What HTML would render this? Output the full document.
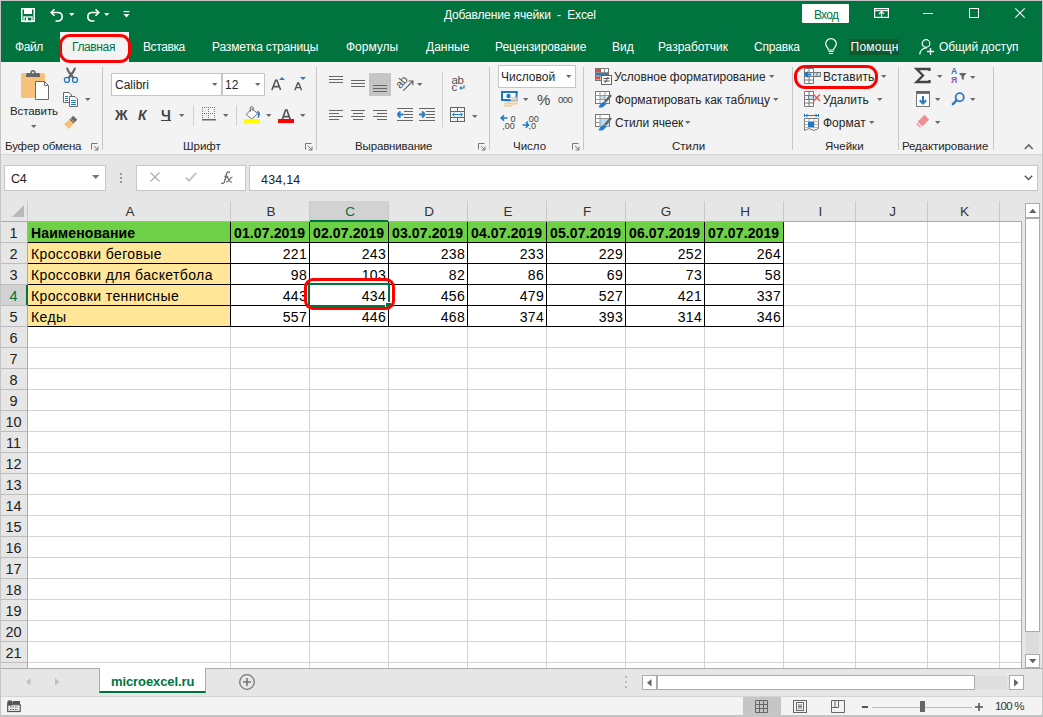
<!DOCTYPE html><html><head><meta charset="utf-8"><style>
*{box-sizing:border-box;margin:0;padding:0}
html,body{width:1043px;height:717px;overflow:hidden;background:#e6e6e6;font-family:"Liberation Sans",sans-serif;position:relative}
.a{position:absolute;white-space:nowrap;line-height:1}
svg.a{overflow:visible}
.ch{position:absolute;top:201px;height:20px;font-size:13.5px;color:#333;text-align:center;line-height:21px}
.rh{position:absolute;left:1px;width:26px;height:20px;font-size:14.5px;color:#222;text-align:center;line-height:22px;padding-right:1px}
.c{position:absolute;height:20px;font-size:14px;line-height:23px;color:#000;white-space:nowrap}
.r{text-align:right}
.hl{position:absolute;height:1px}
.vl{position:absolute;width:1px}
</style></head><body>
<div class="a" style="left:0;top:0;width:1043px;height:717px;border:1px solid #c4c4c4;border-bottom:2px solid #c4c4c4"></div>
<div class="a" style="left:1px;top:1px;width:1041px;height:61px;background:#00733e"></div>
<svg class="a" style="left:21px;top:8px" width="14" height="14" viewBox="0 0 14 14"><path d="M0.75 0.75H13.25V13.25H0.75Z" fill="none" stroke="#fff" stroke-width="1.5"/><rect x="3" y="1" width="8" height="5" fill="#fff"/><rect x="3" y="9" width="8" height="4.5" fill="none" stroke="#fff" stroke-width="1.3"/><rect x="5" y="10" width="2" height="3" fill="#fff"/></svg>
<svg class="a" style="left:50px;top:8px" width="15" height="14" viewBox="0 0 15 14"><path d="M4.5 1.2L1.2 4.5L4.5 7.8" fill="none" stroke="#fff" stroke-width="1.6"/><path d="M1.5 4.5H8.5A4.3 4.3 0 0 1 8.5 13H5.5" fill="none" stroke="#fff" stroke-width="1.6"/></svg>
<svg class="a" style="left:69px;top:13px" width="6" height="4" viewBox="0 0 6 4"><path d="M0 0H5.5L2.75 3Z" fill="#fff"/></svg>
<svg class="a" style="left:85px;top:8px" width="15" height="14" viewBox="0 0 15 14"><path d="M10.5 1.2L13.8 4.5L10.5 7.8" fill="none" stroke="#fff" stroke-width="1.6"/><path d="M13.5 4.5H6.5A4.3 4.3 0 0 0 6.5 13H9.5" fill="none" stroke="#fff" stroke-width="1.6"/></svg>
<svg class="a" style="left:104px;top:13px" width="6" height="4" viewBox="0 0 6 4"><path d="M0 0H5.5L2.75 3Z" fill="#fff"/></svg>
<svg class="a" style="left:123px;top:11px" width="7" height="8" viewBox="0 0 7 8"><rect x="0.5" y="0" width="6" height="1.2" fill="#fff"/><path d="M0.5 3H6.5L3.5 6.5Z" fill="#fff"/></svg>
<div class="a" style="left:444px;top:9px;font-size:12px;color:#fff;letter-spacing:-0.16px">Добавление ячейки &nbsp;- &nbsp;Excel</div>
<div class="a" style="left:802px;top:4px;width:47px;height:19px;background:#fff;border-radius:1px"></div>
<div class="a" style="left:814px;top:8.5px;font-size:12px;color:#00733e;letter-spacing:-0.75px">Вход</div>
<svg class="a" style="left:874px;top:8px" width="15" height="10" viewBox="0 0 15 10"><rect x="0.6" y="0.6" width="13.8" height="8.8" fill="none" stroke="#fff" stroke-width="1.2"/><rect x="0.6" y="2.6" width="13.8" height="0.1" stroke="#fff" stroke-width="1"/><path d="M7.5 3.5V9M5 6L7.5 3.5L10 6" fill="none" stroke="#fff" stroke-width="1.1"/></svg>
<div class="a" style="left:923px;top:13px;width:10px;height:1px;background:#fff"></div>
<div class="a" style="left:969px;top:8px;width:10px;height:10px;border:1px solid #fff"></div>
<svg class="a" style="left:1015px;top:8px" width="10" height="10" viewBox="0 0 10 10"><path d="M0.3 0.3L9.7 9.7M9.7 0.3L0.3 9.7" stroke="#fff" stroke-width="1.1"/></svg>
<div class="a" style="left:15px;top:41px;font-size:12px;color:#fff;letter-spacing:-0.45px">Файл</div>
<div class="a" style="left:60px;top:32px;width:69px;height:30px;background:#f3f3f3"></div>
<div class="a" style="left:72px;top:41px;font-size:12px;color:#00733e;letter-spacing:-0.38px">Главная</div>
<div class="a" style="left:143px;top:41px;font-size:12px;color:#fff;letter-spacing:-0.4px">Вставка</div>
<div class="a" style="left:212px;top:41px;font-size:12px;color:#fff;letter-spacing:-0.15px">Разметка страницы</div>
<div class="a" style="left:346px;top:41px;font-size:12px;color:#fff;">Формулы</div>
<div class="a" style="left:426px;top:41px;font-size:12px;color:#fff;">Данные</div>
<div class="a" style="left:495px;top:41px;font-size:12px;color:#fff;letter-spacing:-0.1px">Рецензирование</div>
<div class="a" style="left:612px;top:41px;font-size:12px;color:#fff;">Вид</div>
<div class="a" style="left:658px;top:41px;font-size:12px;color:#fff;">Разработчик</div>
<div class="a" style="left:754px;top:41px;font-size:12px;color:#fff;letter-spacing:-0.2px">Справка</div>
<svg class="a" style="left:825px;top:39px" width="12" height="16" viewBox="0 0 12 16"><path d="M3.5 11C3.5 9 0.7 7.5 0.7 5A5.3 5.3 0 0 1 11.3 5C11.3 7.5 8.5 9 8.5 11Z" fill="none" stroke="#fff" stroke-width="1.2"/><path d="M3.5 12.5H8.5M4 14.5H8" stroke="#fff" stroke-width="1.2"/></svg>
<div class="a" style="left:849px;top:39px;width:50px;height:16px;background:#0d5a31;overflow:hidden"><div class="a" style="left:1.5px;top:2px;font-size:12px;color:#fff;letter-spacing:0.25px">Помощник</div></div>
<svg class="a" style="left:919px;top:39px" width="16" height="16" viewBox="0 0 16 16"><circle cx="7" cy="4.5" r="3.8" fill="none" stroke="#fff" stroke-width="1.2"/><path d="M0.8 15.5A6.5 6.5 0 0 1 8 9" fill="none" stroke="#fff" stroke-width="1.2"/><path d="M11.5 9V16M8 12.5H15" stroke="#fff" stroke-width="1.3"/></svg>
<div class="a" style="left:939px;top:41px;font-size:12px;color:#fff;letter-spacing:-0.1px">Общий доступ</div>
<div class="a" style="left:1px;top:62px;width:1041px;height:93px;background:#f3f3f3;border-bottom:1px solid #d5d5d5"></div>
<div class="a" style="left:59px;top:34px;width:72px;height:29px;border:3px solid #ff0000;border-radius:11px"></div>
<div class="a" style="left:102px;top:67px;width:1px;height:83px;background:#c8c8c8"></div>
<div class="a" style="left:316px;top:67px;width:1px;height:83px;background:#c8c8c8"></div>
<div class="a" style="left:489px;top:67px;width:1px;height:83px;background:#c8c8c8"></div>
<div class="a" style="left:583px;top:67px;width:1px;height:83px;background:#c8c8c8"></div>
<div class="a" style="left:792px;top:67px;width:1px;height:83px;background:#c8c8c8"></div>
<div class="a" style="left:898px;top:67px;width:1px;height:83px;background:#c8c8c8"></div>
<div class="a" style="left:993px;top:67px;width:1px;height:83px;background:#c8c8c8"></div>
<div class="a" style="left:5px;top:141px;font-size:11.5px;color:#262626;letter-spacing:-0.15px">Буфер обмена</div>
<svg class="a" style="left:91px;top:143px" width="8" height="7" viewBox="0 0 8 7"><path d="M0.5 6.5V0.5H6.5" fill="none" stroke="#777" stroke-width="1"/><path d="M3 3L7 7M7 3.5V7H3.5" fill="none" stroke="#777" stroke-width="1"/></svg>
<div class="a" style="left:183px;top:141px;font-size:11.5px;color:#262626;">Шрифт</div>
<svg class="a" style="left:305px;top:143px" width="8" height="7" viewBox="0 0 8 7"><path d="M0.5 6.5V0.5H6.5" fill="none" stroke="#777" stroke-width="1"/><path d="M3 3L7 7M7 3.5V7H3.5" fill="none" stroke="#777" stroke-width="1"/></svg>
<div class="a" style="left:355px;top:141px;font-size:11.5px;color:#262626;letter-spacing:-0.15px">Выравнивание</div>
<svg class="a" style="left:478px;top:143px" width="8" height="7" viewBox="0 0 8 7"><path d="M0.5 6.5V0.5H6.5" fill="none" stroke="#777" stroke-width="1"/><path d="M3 3L7 7M7 3.5V7H3.5" fill="none" stroke="#777" stroke-width="1"/></svg>
<div class="a" style="left:513px;top:141px;font-size:11.5px;color:#262626;">Число</div>
<svg class="a" style="left:572px;top:143px" width="8" height="7" viewBox="0 0 8 7"><path d="M0.5 6.5V0.5H6.5" fill="none" stroke="#777" stroke-width="1"/><path d="M3 3L7 7M7 3.5V7H3.5" fill="none" stroke="#777" stroke-width="1"/></svg>
<div class="a" style="left:672px;top:141px;font-size:11.5px;color:#262626;">Стили</div>
<div class="a" style="left:825px;top:141px;font-size:11.5px;color:#262626;">Ячейки</div>
<div class="a" style="left:902px;top:141px;font-size:11.5px;color:#262626;letter-spacing:-0.1px">Редактирование</div>
<svg class="a" style="left:1024px;top:143px" width="10" height="7" viewBox="0 0 10 7"><path d="M0.8 6L4.75 2L8.7 6" fill="none" stroke="#666" stroke-width="1.6"/></svg>
<svg class="a" style="left:21px;top:69px" width="28" height="32" viewBox="0 0 28 32"><rect x="0" y="4" width="24" height="25" rx="1.5" fill="#f6c27a"/><path d="M5 8V5.5Q5 4 6.5 4H17.5Q19 4 19 5.5V8Z" fill="#666"/><circle cx="12" cy="3.5" r="2.6" fill="#666"/><circle cx="12" cy="3.5" r="1" fill="#f3f3f3"/><path d="M14.5 12.5H23.5L27.5 16.5V30.5H14.5Z" fill="#fff" stroke="#6a6a6a" stroke-width="1"/><path d="M23.5 12.5V16.5H27.5" fill="none" stroke="#6a6a6a" stroke-width="1"/></svg>
<div class="a" style="left:10px;top:106px;font-size:11.5px;color:#262626;letter-spacing:-0.1px">Вставить</div>
<svg class="a" style="left:31px;top:125px" width="6" height="4" viewBox="0 0 6 4"><path d="M0 0H5.5L2.75 3Z" fill="#6a6a6a"/></svg>
<svg class="a" style="left:64px;top:68px" width="15" height="16" viewBox="0 0 15 16"><path d="M3.2 0.6Q4.6 4.3 7 6.8L9 9.5M10.8 0.6Q9.4 4.3 7 6.8L5 9.5" fill="none" stroke="#666" stroke-width="2.2" stroke-linecap="round"/><circle cx="2.9" cy="11.9" r="2.5" fill="none" stroke="#1f78c1" stroke-width="1.3"/><circle cx="11" cy="11.9" r="2.5" fill="none" stroke="#1f78c1" stroke-width="1.3"/></svg>
<svg class="a" style="left:63px;top:92px" width="16" height="15" viewBox="0 0 16 15"><path d="M0.5 0.5H6L8.5 3V10.5H0.5Z" fill="#fff" stroke="#666" stroke-width="1"/><path d="M6.5 4.5H12L14.5 7V14.5H6.5Z" fill="#fff" stroke="#666" stroke-width="1"/><path d="M2 4.5H5M2 6.5H5M2 8.5H5M8 8.5H13M8 10.5H13M8 12.5H13" stroke="#1f78c1" stroke-width="1"/></svg>
<svg class="a" style="left:85px;top:98px" width="6" height="4" viewBox="0 0 6 4"><path d="M0 0H5.5L2.75 3Z" fill="#6a6a6a"/></svg>
<svg class="a" style="left:63px;top:114px" width="16" height="15" viewBox="0 0 16 15"><path d="M9 3L13 7" stroke="#666" stroke-width="3.5"/><path d="M1 10L7.5 4.5L11.5 8.5L6 15Z" fill="#f6c27a"/><path d="M7 5L11 9" stroke="#666" stroke-width="1.2"/></svg>
<div class="a" style="left:111px;top:73px;width:111px;height:23px;background:#fff;border:1px solid #c6c6c6"></div>
<div class="a" style="left:115px;top:79px;font-size:12px;color:#262626;">Calibri</div>
<svg class="a" style="left:212px;top:83px" width="6" height="4" viewBox="0 0 6 4"><path d="M0 0H5.5L2.75 3Z" fill="#6a6a6a"/></svg>
<div class="a" style="left:222px;top:73px;width:43px;height:23px;background:#fff;border:1px solid #c6c6c6"></div>
<div class="a" style="left:225px;top:79px;font-size:12px;color:#262626;">12</div>
<svg class="a" style="left:255px;top:83px" width="6" height="4" viewBox="0 0 6 4"><path d="M0 0H5.5L2.75 3Z" fill="#6a6a6a"/></svg>
<svg class="a" style="left:271px;top:79px" width="11" height="12" viewBox="0 0 11 12"><path d="M0.9 11L4.6 1.2H5.9L9.6 11M2.4 7.6H8.1" fill="none" stroke="#555" stroke-width="1.6"/></svg>
<svg class="a" style="left:279px;top:77px" width="6" height="3" viewBox="0 0 6 3"><path d="M0 3H6L3 0Z" fill="#2a7ac4"/></svg>
<svg class="a" style="left:294px;top:82px" width="9" height="9" viewBox="0 0 9 9"><path d="M0.8 8.2L3.8 0.9H4.6L7.6 8.2M2 5.6H6.4" fill="none" stroke="#555" stroke-width="1.4"/></svg>
<svg class="a" style="left:300px;top:77px" width="6" height="3" viewBox="0 0 6 3"><path d="M0 0H6L3 3Z" fill="#2a7ac4"/></svg>
<div class="a" style="left:115px;top:108px;font-size:14px;color:#444;font-weight:bold">Ж</div>
<div class="a" style="left:138px;top:108px;font-size:14px;color:#444;font-weight:bold;font-style:italic">К</div>
<div class="a" style="left:161px;top:108px;font-size:14px;color:#444;font-weight:bold">Ч</div>
<div class="a" style="left:161px;top:120px;width:10px;height:1px;background:#444"></div>
<svg class="a" style="left:179px;top:114px" width="6" height="4" viewBox="0 0 6 4"><path d="M0 0H5.5L2.75 3Z" fill="#6a6a6a"/></svg>
<div class="a" style="left:193px;top:105px;width:1px;height:21px;background:#d0d0d0"></div>
<svg class="a" style="left:202px;top:107px" width="14" height="14" viewBox="0 0 14 14"><rect x="0" y="0" width="1" height="1" fill="#777"/><rect x="0" y="2" width="1" height="1" fill="#777"/><rect x="0" y="4" width="1" height="1" fill="#777"/><rect x="0" y="6" width="1" height="1" fill="#777"/><rect x="0" y="8" width="1" height="1" fill="#777"/><rect x="0" y="10" width="1" height="1" fill="#777"/><rect x="0" y="12" width="1" height="1" fill="#777"/><rect x="2" y="0" width="1" height="1" fill="#777"/><rect x="2" y="6" width="1" height="1" fill="#777"/><rect x="2" y="12" width="1" height="1" fill="#777"/><rect x="4" y="0" width="1" height="1" fill="#777"/><rect x="4" y="6" width="1" height="1" fill="#777"/><rect x="4" y="12" width="1" height="1" fill="#777"/><rect x="6" y="0" width="1" height="1" fill="#777"/><rect x="6" y="2" width="1" height="1" fill="#777"/><rect x="6" y="4" width="1" height="1" fill="#777"/><rect x="6" y="6" width="1" height="1" fill="#777"/><rect x="6" y="8" width="1" height="1" fill="#777"/><rect x="6" y="10" width="1" height="1" fill="#777"/><rect x="6" y="12" width="1" height="1" fill="#777"/><rect x="8" y="0" width="1" height="1" fill="#777"/><rect x="8" y="6" width="1" height="1" fill="#777"/><rect x="8" y="12" width="1" height="1" fill="#777"/><rect x="10" y="0" width="1" height="1" fill="#777"/><rect x="10" y="6" width="1" height="1" fill="#777"/><rect x="10" y="12" width="1" height="1" fill="#777"/><rect x="12" y="0" width="1" height="1" fill="#777"/><rect x="12" y="2" width="1" height="1" fill="#777"/><rect x="12" y="4" width="1" height="1" fill="#777"/><rect x="12" y="6" width="1" height="1" fill="#777"/><rect x="12" y="8" width="1" height="1" fill="#777"/><rect x="12" y="10" width="1" height="1" fill="#777"/><rect x="12" y="12" width="1" height="1" fill="#777"/><rect x="0" y="12" width="14" height="1.5" fill="#666"/></svg>
<svg class="a" style="left:223px;top:114px" width="6" height="4" viewBox="0 0 6 4"><path d="M0 0H5.5L2.75 3Z" fill="#6a6a6a"/></svg>
<div class="a" style="left:236px;top:105px;width:1px;height:21px;background:#d0d0d0"></div>
<svg class="a" style="left:244px;top:106px" width="17" height="17" viewBox="0 0 17 17"><path d="M2.2 8.5L8 2.6L13.6 7.6L7.7 13Z" fill="#fff" stroke="#6a6a6a" stroke-width="1"/><path d="M6.3 5.8V1.8Q6.3 0.7 7.4 0.7H8Q9.1 0.7 9.1 1.8V4.8" fill="none" stroke="#6a6a6a" stroke-width="1"/><path d="M13.2 4.6Q16.2 5.6 15.9 8.6Q15.6 11 13.6 12.6Q14.4 9.2 13.2 4.6Z" fill="#1f78c1"/><rect x="0" y="13" width="16" height="4" fill="#ffff00"/></svg>
<svg class="a" style="left:266px;top:114px" width="6" height="4" viewBox="0 0 6 4"><path d="M0 0H5.5L2.75 3Z" fill="#6a6a6a"/></svg>
<svg class="a" style="left:281px;top:108px" width="11" height="12" viewBox="0 0 11 12"><path d="M0.9 12.5L4.6 2H5.9L9.6 12.5M2.4 8.6H8.1" fill="none" stroke="#555" stroke-width="1.7"/></svg>
<div class="a" style="left:278px;top:119px;width:16px;height:4px;background:#ff0000"></div>
<svg class="a" style="left:300px;top:114px" width="6" height="4" viewBox="0 0 6 4"><path d="M0 0H5.5L2.75 3Z" fill="#6a6a6a"/></svg>
<div class="a" style="left:329px;top:76px;width:14px;height:1px;background:#666"></div>
<div class="a" style="left:329px;top:79px;width:14px;height:1px;background:#666"></div>
<div class="a" style="left:329px;top:82px;width:14px;height:1px;background:#666"></div>
<div class="a" style="left:351px;top:80px;width:14px;height:1px;background:#666"></div>
<div class="a" style="left:351px;top:83px;width:14px;height:1px;background:#666"></div>
<div class="a" style="left:351px;top:86px;width:14px;height:1px;background:#666"></div>
<div class="a" style="left:369px;top:73px;width:22px;height:23px;background:#c5c5c5"></div>
<div class="a" style="left:373px;top:85px;width:14px;height:1px;background:#666"></div>
<div class="a" style="left:373px;top:88px;width:14px;height:1px;background:#666"></div>
<div class="a" style="left:373px;top:91px;width:14px;height:1px;background:#666"></div>
<svg class="a" style="left:397px;top:75px" width="17" height="17" viewBox="0 0 17 17"><text x="0" y="0" transform="translate(3.2 14.2) rotate(-48)" font-family="Liberation Sans" font-size="11.5" fill="#505050" letter-spacing="-0.3">ab</text><path d="M6.3 15.6L15.6 6.3M11.6 6H15.9V10.3" fill="none" stroke="#555" stroke-width="1.1"/></svg>
<svg class="a" style="left:417px;top:83px" width="6" height="4" viewBox="0 0 6 4"><path d="M0 0H5.5L2.75 3Z" fill="#6a6a6a"/></svg>
<div class="a" style="left:329px;top:110px;width:14px;height:1px;background:#666"></div>
<div class="a" style="left:351px;top:110px;width:14px;height:1px;background:#666"></div>
<div class="a" style="left:373px;top:110px;width:14px;height:1px;background:#666"></div>
<div class="a" style="left:329px;top:113px;width:10px;height:1px;background:#666"></div>
<div class="a" style="left:353px;top:113px;width:10px;height:1px;background:#666"></div>
<div class="a" style="left:377px;top:113px;width:10px;height:1px;background:#666"></div>
<div class="a" style="left:329px;top:116px;width:14px;height:1px;background:#666"></div>
<div class="a" style="left:351px;top:116px;width:14px;height:1px;background:#666"></div>
<div class="a" style="left:373px;top:116px;width:14px;height:1px;background:#666"></div>
<div class="a" style="left:329px;top:119px;width:10px;height:1px;background:#666"></div>
<div class="a" style="left:353px;top:119px;width:10px;height:1px;background:#666"></div>
<div class="a" style="left:377px;top:119px;width:10px;height:1px;background:#666"></div>
<svg class="a" style="left:397px;top:108px" width="16" height="13" viewBox="0 0 16 13"><path d="M0 0.5H16M7 3.5H16M7 6.5H16M7 9.5H16M0 12.5H16" stroke="#666" stroke-width="1"/><path d="M0.5 6.5L3.5 3.5M0.5 6.5L3.5 9.5M1 6.5H6.5" stroke="#2a7ac4" stroke-width="1.8" fill="none"/></svg>
<svg class="a" style="left:419px;top:108px" width="16" height="13" viewBox="0 0 16 13"><path d="M0 0.5H16M7 3.5H16M7 6.5H16M7 9.5H16M0 12.5H16" stroke="#666" stroke-width="1"/><path d="M6 6.5L3 3.5M6 6.5L3 9.5M0 6.5H5.5" stroke="#2a7ac4" stroke-width="1.8" fill="none"/></svg>
<div class="a" style="left:442px;top:72px;width:1px;height:55px;background:#d0d0d0"></div>
<div class="a" style="left:451.5px;top:74.5px;font-size:11.5px;color:#505050;letter-spacing:-0.4px">ab</div>
<div class="a" style="left:451.5px;top:82px;font-size:11.5px;color:#505050;">c</div>
<svg class="a" style="left:459px;top:85px" width="6" height="5" viewBox="0 0 6 5"><path d="M5 0V3H1M2.5 1.5L1 3L2.5 4.5" fill="none" stroke="#2a7ac4" stroke-width="1.1"/></svg>
<svg class="a" style="left:450px;top:107px" width="15" height="15" viewBox="0 0 15 15"><rect x="0.5" y="0.5" width="14" height="14" fill="none" stroke="#666" stroke-width="1"/><path d="M0.5 4.5H14.5M0.5 10.5H14.5M7.5 0.5V4.5M7.5 10.5V14.5" stroke="#666" stroke-width="1"/><path d="M2.5 7.5H12.5M4.5 5.8L2.5 7.5L4.5 9.2M10.5 5.8L12.5 7.5L10.5 9.2" fill="none" stroke="#2a7ac4" stroke-width="1"/></svg>
<svg class="a" style="left:472px;top:115px" width="6" height="4" viewBox="0 0 6 4"><path d="M0 0H5.5L2.75 3Z" fill="#6a6a6a"/></svg>
<div class="a" style="left:498px;top:65px;width:78px;height:23px;background:#fff;border:1px solid #c6c6c6"></div>
<div class="a" style="left:501px;top:71px;font-size:12px;color:#262626;">Числовой</div>
<svg class="a" style="left:566px;top:75px" width="6" height="4" viewBox="0 0 6 4"><path d="M0 0H5.5L2.75 3Z" fill="#6a6a6a"/></svg>
<svg class="a" style="left:501px;top:91px" width="17" height="17" viewBox="0 0 17 17"><rect x="1" y="1" width="14.5" height="8" fill="#fff" stroke="#1f78c1" stroke-width="2"/><circle cx="7.5" cy="5" r="2.2" fill="#1f78c1"/><path d="M0 0H3L0 3Z M16.5 0H13.5L16.5 3Z M0 10H3L0 7Z" fill="#1f78c1"/><path d="M10 6.8H16M10 8.8H16M10 10.8H16M10 12.8H16" stroke="#f6c27a" stroke-width="1.5" stroke-linecap="round"/><path d="M4 10.8H10M4 12.8H10M4 14.8H10" stroke="#f6c27a" stroke-width="1.5" stroke-linecap="round"/><path d="M10 7.8H16M10 9.8H16M10 11.8H16M4 11.8H10M4 13.8H10" stroke="#fff" stroke-width="0.5"/></svg>
<svg class="a" style="left:523px;top:98px" width="6" height="4" viewBox="0 0 6 4"><path d="M0 0H5.5L2.75 3Z" fill="#6a6a6a"/></svg>
<div class="a" style="left:537px;top:92px;font-size:15px;color:#444;">%</div>
<div class="a" style="left:558px;top:94.5px;font-size:9.5px;color:#444;letter-spacing:-0.5px">000</div>
<svg class="a" style="left:500px;top:114px" width="17" height="16" viewBox="0 0 17 16"><path d="M1.2 4H7.5M4 1.3L1.2 4L4 6.7" fill="none" stroke="#1f78c1" stroke-width="1.6"/><text x="10.5" y="7.5" font-family="Liberation Sans" font-size="9" fill="#444">0</text><text x="2.2" y="14.5" font-family="Liberation Sans" font-size="9" fill="#444">,00</text></svg>
<svg class="a" style="left:522px;top:114px" width="17" height="16" viewBox="0 0 17 16"><text x="4.2" y="7.5" font-family="Liberation Sans" font-size="9" fill="#444">,00</text><path d="M0.5 11H6.5M3.8 8.3L6.5 11L3.8 13.7" fill="none" stroke="#1f78c1" stroke-width="1.6"/><text x="6.5" y="14.5" font-family="Liberation Sans" font-size="9" fill="#444">,0</text></svg>
<svg class="a" style="left:595px;top:68px" width="17" height="17" viewBox="0 0 17 17"><rect x="0.5" y="0.5" width="13" height="12" fill="#fff" stroke="#777" stroke-width="1"/><rect x="1" y="1" width="5" height="3" fill="#e04b4b"/><rect x="1" y="5" width="12" height="2.5" fill="#2a7ac4"/><rect x="1" y="8.5" width="4" height="3" fill="#e04b4b"/><path d="M5 0.5V12.5M9.5 0.5V12.5M0.5 4.5H13.5M0.5 8H13.5" stroke="#777" stroke-width="0.8"/><rect x="6.5" y="7.5" width="10" height="9" fill="#fff" stroke="#666" stroke-width="1"/><path d="M8.5 10.5H14.5M8.5 13H14.5M10 15L13 9" stroke="#555" stroke-width="1"/></svg>
<div class="a" style="left:614px;top:71px;font-size:12px;color:#262626;letter-spacing:-0.05px">Условное форматирование</div>
<svg class="a" style="left:769px;top:75px" width="6" height="4" viewBox="0 0 6 4"><path d="M0 0H5.5L2.75 3Z" fill="#6a6a6a"/></svg>
<svg class="a" style="left:595px;top:91px" width="17" height="17" viewBox="0 0 17 17"><rect x="0.5" y="0.5" width="14" height="12" fill="#fff" stroke="#777" stroke-width="1"/><rect x="5" y="4.5" width="5" height="4" fill="#b7dbef"/><path d="M5 0.5V12.5M10 0.5V12.5M0.5 4.5H14.5M0.5 8.5H14.5" stroke="#999" stroke-width="1"/><path d="M16 4L10 11" stroke="#666" stroke-width="2.5"/><path d="M9 10.5L11.5 13L7.5 16.5H3.5Q5 12 9 10.5Z" fill="#2a7ac4"/></svg>
<div class="a" style="left:615px;top:94px;font-size:12px;color:#262626;letter-spacing:-0.05px">Форматировать как таблицу</div>
<svg class="a" style="left:773px;top:98px" width="6" height="4" viewBox="0 0 6 4"><path d="M0 0H5.5L2.75 3Z" fill="#6a6a6a"/></svg>
<svg class="a" style="left:595px;top:114px" width="17" height="17" viewBox="0 0 17 17"><rect x="0.5" y="0.5" width="14" height="12" fill="#fff" stroke="#777" stroke-width="1"/><rect x="5" y="4.5" width="9" height="8" fill="#b7dbef"/><path d="M5 0.5V12.5M0.5 4.5H14.5M0.5 8.5H5" stroke="#999" stroke-width="1"/><path d="M16 4L10 11" stroke="#666" stroke-width="2.5"/><path d="M9 10.5L11.5 13L7.5 16.5H3.5Q5 12 9 10.5Z" fill="#2a7ac4"/></svg>
<div class="a" style="left:615px;top:117px;font-size:12px;color:#262626;letter-spacing:-0.1px">Стили ячеек</div>
<svg class="a" style="left:685px;top:121px" width="6" height="4" viewBox="0 0 6 4"><path d="M0 0H5.5L2.75 3Z" fill="#6a6a6a"/></svg>
<svg class="a" style="left:804px;top:68px" width="17" height="17" viewBox="0 0 17 17"><path d="M0.5 0.5H9.5V15.5H0.5Z" fill="#fff" stroke="#777"/><path d="M5 0.5V4.5M0.5 4.5H9.5M0.5 8.5H9.5M0.5 12H9.5M5 8.5V15.5" stroke="#777"/><rect x="9.5" y="4.5" width="7" height="4" fill="#b7dbef" stroke="#777"/><path d="M13 4.5V8.5" stroke="#777"/><path d="M1.3 6.5H7.5M4 3.8L1.3 6.5L4 9.2" fill="none" stroke="#1f78c1" stroke-width="1.8"/></svg>
<div class="a" style="left:823px;top:71px;font-size:12px;color:#262626;letter-spacing:0.05px">Вставить</div>
<svg class="a" style="left:881px;top:75px" width="6" height="4" viewBox="0 0 6 4"><path d="M0 0H5.5L2.75 3Z" fill="#6a6a6a"/></svg>
<svg class="a" style="left:804px;top:91px" width="17" height="16" viewBox="0 0 17 16"><path d="M0.5 0.5H9.5V4.5H0.5Z M5 0.5V4.5 M0.5 8.5H9.5V15.5H0.5Z M5 8.5V15.5 M0.5 12H9.5" fill="#fff" stroke="#777"/><path d="M0.5 4.5V8.5" stroke="#777"/><rect x="4.5" y="4.5" width="5" height="4" fill="#b7dbef" stroke="#777"/><path d="M9.5 3.5L16 10M16 3.5L9.5 10" stroke="#f04e4e" stroke-width="1.4"/></svg>
<div class="a" style="left:823px;top:94px;font-size:12px;color:#262626;">Удалить</div>
<svg class="a" style="left:877px;top:98px" width="6" height="4" viewBox="0 0 6 4"><path d="M0 0H5.5L2.75 3Z" fill="#6a6a6a"/></svg>
<svg class="a" style="left:804px;top:114px" width="16" height="17" viewBox="0 0 16 17"><path d="M1.5 1.5H13.5M0.5 0V3M14.5 0V3M3.5 0.2L1.5 1.5L3.5 2.8M11.5 0.2L13.5 1.5L11.5 2.8" stroke="#1f78c1" stroke-width="1" fill="none"/><path d="M0.5 4.5H14.5V14.5L10 16.5L5 14.5L0.5 16.5Z" fill="#fff" stroke="#777"/><path d="M0.5 7.5H14.5M0.5 10.5H14.5M0.5 13.5H14.5M5 4.5V14.5M10 4.5V14.5" stroke="#aaa" stroke-width="0.9"/><rect x="4" y="8" width="6" height="5" fill="#1f78c1"/></svg>
<div class="a" style="left:823px;top:117px;font-size:12px;color:#262626;">Формат</div>
<svg class="a" style="left:869px;top:121px" width="6" height="4" viewBox="0 0 6 4"><path d="M0 0H5.5L2.75 3Z" fill="#6a6a6a"/></svg>
<div class="a" style="left:794px;top:65px;width:84px;height:24px;border:3px solid #ff0000;border-radius:11px"></div>
<svg class="a" style="left:915px;top:68px" width="16" height="16" viewBox="0 0 16 16"><path d="M14.5 3V1H1.5L8 7.5L1.5 14H14.5V12" fill="none" stroke="#444" stroke-width="2.3"/></svg>
<svg class="a" style="left:937px;top:75px" width="6" height="4" viewBox="0 0 6 4"><path d="M0 0H5.5L2.75 3Z" fill="#6a6a6a"/></svg>
<div class="a" style="left:951px;top:67px;font-size:8.5px;color:#2a7ac4;font-weight:bold">A</div>
<div class="a" style="left:951px;top:76px;font-size:8.5px;color:#8e4fc1;font-weight:bold">Я</div>
<svg class="a" style="left:959px;top:73px" width="8" height="7" viewBox="0 0 8 7"><path d="M0 0H7.5L4.8 3.5V7L2.7 6V3.5Z" fill="#666"/></svg>
<svg class="a" style="left:970px;top:76px" width="6" height="4" viewBox="0 0 6 4"><path d="M0 0H5.5L2.75 3Z" fill="#6a6a6a"/></svg>
<svg class="a" style="left:916px;top:91px" width="14" height="16" viewBox="0 0 14 16"><rect x="0" y="0" width="14" height="3" fill="#666"/><rect x="0.5" y="2.5" width="13" height="13" fill="#fff" stroke="#777" stroke-width="1"/><path d="M7 5V12.5M3.8 9.3L7 12.5L10.2 9.3" fill="none" stroke="#2a7ac4" stroke-width="2"/></svg>
<svg class="a" style="left:935px;top:98px" width="6" height="4" viewBox="0 0 6 4"><path d="M0 0H5.5L2.75 3Z" fill="#6a6a6a"/></svg>
<svg class="a" style="left:951px;top:92px" width="14" height="14" viewBox="0 0 14 14"><circle cx="8.7" cy="5.3" r="4.1" fill="none" stroke="#2a7ac4" stroke-width="1.8"/><path d="M5.8 8.2L1.2 12.8" stroke="#2a7ac4" stroke-width="2.5"/></svg>
<svg class="a" style="left:970px;top:98px" width="6" height="4" viewBox="0 0 6 4"><path d="M0 0H5.5L2.75 3Z" fill="#6a6a6a"/></svg>
<svg class="a" style="left:916px;top:114px" width="14" height="14" viewBox="0 0 14 14"><path d="M8.5 0.8L13.2 5.5L6 12.7L1.3 8Z" fill="#f08b92"/><path d="M1.3 8L6 12.7" stroke="#fff" stroke-width="1"/><path d="M0.6 9.5L4.5 13.4" stroke="#f08b92" stroke-width="1.3"/></svg>
<svg class="a" style="left:935px;top:121px" width="6" height="4" viewBox="0 0 6 4"><path d="M0 0H5.5L2.75 3Z" fill="#6a6a6a"/></svg>
<div class="a" style="left:4px;top:165px;width:102px;height:26px;background:#fff;border:1px solid #c6c6c6"></div>
<div class="a" style="left:11px;top:173px;font-size:12.5px;color:#222;letter-spacing:-0.3px">C4</div>
<svg class="a" style="left:92px;top:175px" width="8" height="5" viewBox="0 0 8 5"><path d="M0 0H7.5L3.75 4Z" fill="#777"/></svg>
<div class="a" style="left:120px;top:173px;width:2px;height:2px;background:#999"></div>
<div class="a" style="left:120px;top:177px;width:2px;height:2px;background:#999"></div>
<div class="a" style="left:120px;top:181px;width:2px;height:2px;background:#999"></div>
<div class="a" style="left:136px;top:165px;width:110px;height:26px;background:#fff;border:1px solid #c6c6c6"></div>
<svg class="a" style="left:150px;top:172px" width="10" height="10" viewBox="0 0 10 10"><path d="M0.5 0.5L9.5 9.5M9.5 0.5L0.5 9.5" stroke="#b0b0b0" stroke-width="1.3"/></svg>
<svg class="a" style="left:185px;top:172px" width="12" height="10" viewBox="0 0 12 10"><path d="M0.8 5.5L4 8.8L11.2 1" fill="none" stroke="#c6c6c6" stroke-width="2"/></svg>
<svg class="a" style="left:220px;top:171px" width="15" height="15" viewBox="0 0 15 15"><path d="M10 1.6Q8.3 0.2 7 1.8Q6.3 2.8 5.6 6.5L4.6 10.5Q3.8 13.2 1.2 12.2" fill="none" stroke="#666" stroke-width="1.25"/><path d="M4.3 5.3H8.2" stroke="#666" stroke-width="1"/><path d="M6.2 6.5Q7.5 6 8.3 7.5L10 10.5Q10.8 11.5 12 10.8M12.5 6.3Q11.8 6 10.8 7L8.5 9.8Q7.5 11.2 6.2 10.8" fill="none" stroke="#666" stroke-width="1.1"/></svg>
<div class="a" style="left:249px;top:165px;width:789px;height:26px;background:#fff;border:1px solid #c6c6c6"></div>
<div class="a" style="left:261px;top:173.5px;font-size:12.5px;color:#222;letter-spacing:0.2px">434,14</div>
<svg class="a" style="left:1024px;top:175px" width="9" height="6" viewBox="0 0 9 6"><path d="M0.8 0.8L4.5 4.5L8.2 0.8" fill="none" stroke="#555" stroke-width="1.4"/></svg>
<div class="a" style="left:28px;top:222px;width:993px;height:446px;background:#fff"></div>
<div class="a" style="left:1px;top:201px;width:1021px;height:21px;background:#e6e6e6;border-bottom:1px solid #ababab"></div>
<div class="a" style="left:1px;top:222px;width:27px;height:446px;background:#e6e6e6;border-right:1px solid #ababab"></div>
<div class="a" style="left:27px;top:201px;width:1px;height:20px;background:#c8c8c8"></div>
<svg class="a" style="left:12px;top:205px" width="13" height="13" viewBox="0 0 13 13"><path d="M12 0V12H0Z" fill="#b8b8b8"/></svg>
<div class="a" style="left:310px;top:201px;width:78px;height:21px;background:#d2d2d2;border-bottom:2px solid #00733e"></div>
<div class="a" style="left:1px;top:285px;width:27px;height:20px;background:#d2d2d2;border-right:2px solid #00733e"></div>
<div class="ch" style="left:29px;width:202px;color:#333">A</div>
<div class="a" style="left:230px;top:201px;width:1px;height:20px;background:#c8c8c8"></div>
<div class="ch" style="left:232px;width:78px;color:#333">B</div>
<div class="a" style="left:309px;top:201px;width:1px;height:20px;background:#c8c8c8"></div>
<div class="ch" style="left:311px;width:78px;color:#00733e">C</div>
<div class="a" style="left:388px;top:201px;width:1px;height:20px;background:#c8c8c8"></div>
<div class="ch" style="left:390px;width:78px;color:#333">D</div>
<div class="a" style="left:467px;top:201px;width:1px;height:20px;background:#c8c8c8"></div>
<div class="ch" style="left:469px;width:78px;color:#333">E</div>
<div class="a" style="left:546px;top:201px;width:1px;height:20px;background:#c8c8c8"></div>
<div class="ch" style="left:548px;width:78px;color:#333">F</div>
<div class="a" style="left:625px;top:201px;width:1px;height:20px;background:#c8c8c8"></div>
<div class="ch" style="left:627px;width:78px;color:#333">G</div>
<div class="a" style="left:704px;top:201px;width:1px;height:20px;background:#c8c8c8"></div>
<div class="ch" style="left:706px;width:78px;color:#333">H</div>
<div class="a" style="left:783px;top:201px;width:1px;height:20px;background:#c8c8c8"></div>
<div class="ch" style="left:785px;width:71px;color:#333">I</div>
<div class="a" style="left:855px;top:201px;width:1px;height:20px;background:#c8c8c8"></div>
<div class="ch" style="left:857px;width:71px;color:#333">J</div>
<div class="a" style="left:927px;top:201px;width:1px;height:20px;background:#c8c8c8"></div>
<div class="ch" style="left:929px;width:71px;color:#333">K</div>
<div class="a" style="left:999px;top:201px;width:1px;height:20px;background:#c8c8c8"></div>
<div class="hl" style="left:28px;top:242px;width:993px;background:#d4d4d4"></div>
<div class="hl" style="left:1px;top:242px;width:26px;background:#bcbcbc"></div>
<div class="hl" style="left:28px;top:263px;width:993px;background:#d4d4d4"></div>
<div class="hl" style="left:1px;top:263px;width:26px;background:#bcbcbc"></div>
<div class="hl" style="left:28px;top:284px;width:993px;background:#d4d4d4"></div>
<div class="hl" style="left:1px;top:284px;width:26px;background:#bcbcbc"></div>
<div class="hl" style="left:28px;top:305px;width:993px;background:#d4d4d4"></div>
<div class="hl" style="left:1px;top:305px;width:26px;background:#bcbcbc"></div>
<div class="hl" style="left:28px;top:326px;width:993px;background:#d4d4d4"></div>
<div class="hl" style="left:1px;top:326px;width:26px;background:#bcbcbc"></div>
<div class="hl" style="left:28px;top:347px;width:993px;background:#d4d4d4"></div>
<div class="hl" style="left:1px;top:347px;width:26px;background:#bcbcbc"></div>
<div class="hl" style="left:28px;top:368px;width:993px;background:#d4d4d4"></div>
<div class="hl" style="left:1px;top:368px;width:26px;background:#bcbcbc"></div>
<div class="hl" style="left:28px;top:389px;width:993px;background:#d4d4d4"></div>
<div class="hl" style="left:1px;top:389px;width:26px;background:#bcbcbc"></div>
<div class="hl" style="left:28px;top:410px;width:993px;background:#d4d4d4"></div>
<div class="hl" style="left:1px;top:410px;width:26px;background:#bcbcbc"></div>
<div class="hl" style="left:28px;top:431px;width:993px;background:#d4d4d4"></div>
<div class="hl" style="left:1px;top:431px;width:26px;background:#bcbcbc"></div>
<div class="hl" style="left:28px;top:452px;width:993px;background:#d4d4d4"></div>
<div class="hl" style="left:1px;top:452px;width:26px;background:#bcbcbc"></div>
<div class="hl" style="left:28px;top:473px;width:993px;background:#d4d4d4"></div>
<div class="hl" style="left:1px;top:473px;width:26px;background:#bcbcbc"></div>
<div class="hl" style="left:28px;top:494px;width:993px;background:#d4d4d4"></div>
<div class="hl" style="left:1px;top:494px;width:26px;background:#bcbcbc"></div>
<div class="hl" style="left:28px;top:515px;width:993px;background:#d4d4d4"></div>
<div class="hl" style="left:1px;top:515px;width:26px;background:#bcbcbc"></div>
<div class="hl" style="left:28px;top:536px;width:993px;background:#d4d4d4"></div>
<div class="hl" style="left:1px;top:536px;width:26px;background:#bcbcbc"></div>
<div class="hl" style="left:28px;top:557px;width:993px;background:#d4d4d4"></div>
<div class="hl" style="left:1px;top:557px;width:26px;background:#bcbcbc"></div>
<div class="hl" style="left:28px;top:578px;width:993px;background:#d4d4d4"></div>
<div class="hl" style="left:1px;top:578px;width:26px;background:#bcbcbc"></div>
<div class="hl" style="left:28px;top:599px;width:993px;background:#d4d4d4"></div>
<div class="hl" style="left:1px;top:599px;width:26px;background:#bcbcbc"></div>
<div class="hl" style="left:28px;top:620px;width:993px;background:#d4d4d4"></div>
<div class="hl" style="left:1px;top:620px;width:26px;background:#bcbcbc"></div>
<div class="hl" style="left:28px;top:641px;width:993px;background:#d4d4d4"></div>
<div class="hl" style="left:1px;top:641px;width:26px;background:#bcbcbc"></div>
<div class="hl" style="left:28px;top:662px;width:993px;background:#d4d4d4"></div>
<div class="hl" style="left:1px;top:662px;width:26px;background:#bcbcbc"></div>
<div class="vl" style="left:230px;top:222px;height:446px;background:#d4d4d4"></div>
<div class="vl" style="left:309px;top:222px;height:446px;background:#d4d4d4"></div>
<div class="vl" style="left:388px;top:222px;height:446px;background:#d4d4d4"></div>
<div class="vl" style="left:467px;top:222px;height:446px;background:#d4d4d4"></div>
<div class="vl" style="left:546px;top:222px;height:446px;background:#d4d4d4"></div>
<div class="vl" style="left:625px;top:222px;height:446px;background:#d4d4d4"></div>
<div class="vl" style="left:704px;top:222px;height:446px;background:#d4d4d4"></div>
<div class="vl" style="left:783px;top:222px;height:446px;background:#d4d4d4"></div>
<div class="vl" style="left:855px;top:222px;height:446px;background:#d4d4d4"></div>
<div class="vl" style="left:927px;top:222px;height:446px;background:#d4d4d4"></div>
<div class="vl" style="left:999px;top:222px;height:446px;background:#d4d4d4"></div>
<div class="a" style="left:1021px;top:221px;width:1px;height:447px;background:#ababab"></div>
<div class="rh" style="top:222px;color:#222">1</div>
<div class="rh" style="top:243px;color:#222">2</div>
<div class="rh" style="top:264px;color:#222">3</div>
<div class="rh" style="top:285px;color:#00733e">4</div>
<div class="rh" style="top:306px;color:#222">5</div>
<div class="rh" style="top:327px;color:#222">6</div>
<div class="rh" style="top:348px;color:#222">7</div>
<div class="rh" style="top:369px;color:#222">8</div>
<div class="rh" style="top:390px;color:#222">9</div>
<div class="rh" style="top:411px;color:#222">10</div>
<div class="rh" style="top:432px;color:#222">11</div>
<div class="rh" style="top:453px;color:#222">12</div>
<div class="rh" style="top:474px;color:#222">13</div>
<div class="rh" style="top:495px;color:#222">14</div>
<div class="rh" style="top:516px;color:#222">15</div>
<div class="rh" style="top:537px;color:#222">16</div>
<div class="rh" style="top:558px;color:#222">17</div>
<div class="rh" style="top:579px;color:#222">18</div>
<div class="rh" style="top:600px;color:#222">19</div>
<div class="rh" style="top:621px;color:#222">20</div>
<div class="rh" style="top:642px;color:#222">21</div>
<div class="rh" style="top:663px;color:#222">22</div>
<div class="a" style="left:28px;top:222px;width:755px;height:20px;background:#6dd046"></div>
<div class="a" style="left:28px;top:243px;width:202px;height:83px;background:#ffe699"></div>
<div class="hl" style="left:28px;top:242px;width:756px;background:#000"></div>
<div class="hl" style="left:28px;top:263px;width:756px;background:#000"></div>
<div class="hl" style="left:28px;top:284px;width:756px;background:#000"></div>
<div class="hl" style="left:28px;top:305px;width:756px;background:#000"></div>
<div class="hl" style="left:28px;top:326px;width:756px;background:#000"></div>
<div class="vl" style="left:230px;top:222px;height:105px;background:#000"></div>
<div class="vl" style="left:309px;top:222px;height:105px;background:#000"></div>
<div class="vl" style="left:388px;top:222px;height:105px;background:#000"></div>
<div class="vl" style="left:467px;top:222px;height:105px;background:#000"></div>
<div class="vl" style="left:546px;top:222px;height:105px;background:#000"></div>
<div class="vl" style="left:625px;top:222px;height:105px;background:#000"></div>
<div class="vl" style="left:704px;top:222px;height:105px;background:#000"></div>
<div class="vl" style="left:783px;top:222px;height:105px;background:#000"></div>
<div class="c" style="left:28px;top:222px;width:202px;font-weight:bold;padding-left:3px;letter-spacing:0.12px">Наименование</div>
<div class="c" style="left:231px;top:222px;width:78px;font-weight:bold;padding-left:3px;letter-spacing:0.12px">01.07.2019</div>
<div class="c" style="left:310px;top:222px;width:78px;font-weight:bold;padding-left:3px;letter-spacing:0.12px">02.07.2019</div>
<div class="c" style="left:389px;top:222px;width:78px;font-weight:bold;padding-left:3px;letter-spacing:0.12px">03.07.2019</div>
<div class="c" style="left:468px;top:222px;width:78px;font-weight:bold;padding-left:3px;letter-spacing:0.12px">04.07.2019</div>
<div class="c" style="left:547px;top:222px;width:78px;font-weight:bold;padding-left:3px;letter-spacing:0.12px">05.07.2019</div>
<div class="c" style="left:626px;top:222px;width:78px;font-weight:bold;padding-left:3px;letter-spacing:0.12px">06.07.2019</div>
<div class="c" style="left:705px;top:222px;width:78px;font-weight:bold;padding-left:3px;letter-spacing:0.12px">07.07.2019</div>
<div class="c" style="left:28px;top:243px;width:202px;padding-left:3px;letter-spacing:0.38px">Кроссовки беговые</div>
<div class="c r" style="left:231px;top:243px;width:78px;padding-right:2px;letter-spacing:0.3px">221</div>
<div class="c r" style="left:310px;top:243px;width:78px;padding-right:2px;letter-spacing:0.3px">243</div>
<div class="c r" style="left:389px;top:243px;width:78px;padding-right:2px;letter-spacing:0.3px">238</div>
<div class="c r" style="left:468px;top:243px;width:78px;padding-right:2px;letter-spacing:0.3px">233</div>
<div class="c r" style="left:547px;top:243px;width:78px;padding-right:2px;letter-spacing:0.3px">229</div>
<div class="c r" style="left:626px;top:243px;width:78px;padding-right:2px;letter-spacing:0.3px">252</div>
<div class="c r" style="left:705px;top:243px;width:78px;padding-right:2px;letter-spacing:0.3px">264</div>
<div class="c" style="left:28px;top:264px;width:202px;padding-left:3px;letter-spacing:0.38px">Кроссовки для баскетбола</div>
<div class="c r" style="left:231px;top:264px;width:78px;padding-right:2px;letter-spacing:0.3px">98</div>
<div class="c r" style="left:310px;top:264px;width:78px;padding-right:2px;letter-spacing:0.3px">103</div>
<div class="c r" style="left:389px;top:264px;width:78px;padding-right:2px;letter-spacing:0.3px">82</div>
<div class="c r" style="left:468px;top:264px;width:78px;padding-right:2px;letter-spacing:0.3px">86</div>
<div class="c r" style="left:547px;top:264px;width:78px;padding-right:2px;letter-spacing:0.3px">69</div>
<div class="c r" style="left:626px;top:264px;width:78px;padding-right:2px;letter-spacing:0.3px">73</div>
<div class="c r" style="left:705px;top:264px;width:78px;padding-right:2px;letter-spacing:0.3px">58</div>
<div class="c" style="left:28px;top:285px;width:202px;padding-left:3px;letter-spacing:0.38px">Кроссовки теннисные</div>
<div class="c r" style="left:231px;top:285px;width:78px;padding-right:2px;letter-spacing:0.3px">443</div>
<div class="c r" style="left:310px;top:285px;width:78px;padding-right:2px;letter-spacing:0.3px">434</div>
<div class="c r" style="left:389px;top:285px;width:78px;padding-right:2px;letter-spacing:0.3px">456</div>
<div class="c r" style="left:468px;top:285px;width:78px;padding-right:2px;letter-spacing:0.3px">479</div>
<div class="c r" style="left:547px;top:285px;width:78px;padding-right:2px;letter-spacing:0.3px">527</div>
<div class="c r" style="left:626px;top:285px;width:78px;padding-right:2px;letter-spacing:0.3px">421</div>
<div class="c r" style="left:705px;top:285px;width:78px;padding-right:2px;letter-spacing:0.3px">337</div>
<div class="c" style="left:28px;top:306px;width:202px;padding-left:3px;letter-spacing:0.38px">Кеды</div>
<div class="c r" style="left:231px;top:306px;width:78px;padding-right:2px;letter-spacing:0.3px">557</div>
<div class="c r" style="left:310px;top:306px;width:78px;padding-right:2px;letter-spacing:0.3px">446</div>
<div class="c r" style="left:389px;top:306px;width:78px;padding-right:2px;letter-spacing:0.3px">468</div>
<div class="c r" style="left:468px;top:306px;width:78px;padding-right:2px;letter-spacing:0.3px">374</div>
<div class="c r" style="left:547px;top:306px;width:78px;padding-right:2px;letter-spacing:0.3px">393</div>
<div class="c r" style="left:626px;top:306px;width:78px;padding-right:2px;letter-spacing:0.3px">314</div>
<div class="c r" style="left:705px;top:306px;width:78px;padding-right:2px;letter-spacing:0.3px">346</div>
<div class="a" style="left:308px;top:283px;width:82px;height:24px;border:2px solid #00733e"></div>
<div class="a" style="left:385px;top:302px;width:7px;height:7px;background:#fff"></div>
<div class="a" style="left:386px;top:303px;width:5px;height:5px;background:#00733e"></div>
<div class="a" style="left:304px;top:278px;width:91px;height:32px;border:3px solid #ff0000;border-radius:9px"></div>
<div class="a" style="left:1025px;top:203px;width:15px;height:15px;background:#fff;border:1px solid #ababab"></div>
<svg class="a" style="left:1029px;top:208px" width="8" height="5" viewBox="0 0 8 5"><path d="M0 5H7.5L3.75 0.8Z" fill="#666"/></svg>
<div class="a" style="left:1025px;top:218px;width:15px;height:414px;background:#fff;border:1px solid #ababab"></div>
<div class="a" style="left:1026px;top:632px;width:13px;height:22px;background:#dcdcdc"></div>
<div class="a" style="left:1025px;top:654px;width:15px;height:14px;background:#fff;border:1px solid #ababab"></div>
<svg class="a" style="left:1029px;top:659px" width="8" height="5" viewBox="0 0 8 5"><path d="M0 0H7.5L3.75 4.2Z" fill="#666"/></svg>
<div class="a" style="left:1px;top:668px;width:1041px;height:28px;background:#e6e6e6;border-top:1px solid #ababab"></div>
<svg class="a" style="left:26px;top:678px" width="5" height="8" viewBox="0 0 5 8"><path d="M4.5 0V7.5L0 3.75Z" fill="#c0c0c0"/></svg>
<svg class="a" style="left:55px;top:678px" width="5" height="8" viewBox="0 0 5 8"><path d="M0 0V7.5L4.5 3.75Z" fill="#c0c0c0"/></svg>
<div class="a" style="left:99px;top:668px;width:107px;height:25px;background:#fff;border-left:1px solid #ababab;border-right:1px solid #ababab;border-bottom:2px solid #00733e"></div>
<div class="a" style="left:111px;top:675px;font-size:13px;color:#00733e;font-weight:bold;letter-spacing:-0.1px">microexcel.ru</div>
<svg class="a" style="left:239px;top:674px" width="17" height="17" viewBox="0 0 17 17"><circle cx="8" cy="8" r="7.3" fill="none" stroke="#777" stroke-width="1.3"/><path d="M8 4V12M4 8H12" stroke="#777" stroke-width="1.6"/></svg>
<div class="a" style="left:625px;top:676px;width:2px;height:2px;background:#bbb"></div>
<div class="a" style="left:625px;top:681px;width:2px;height:2px;background:#bbb"></div>
<div class="a" style="left:625px;top:686px;width:2px;height:2px;background:#bbb"></div>
<div class="a" style="left:642px;top:675px;width:15px;height:15px;background:#fff;border:1px solid #ababab"></div>
<svg class="a" style="left:647px;top:679px" width="5" height="8" viewBox="0 0 5 8"><path d="M4.5 0V7.5L0 3.75Z" fill="#666"/></svg>
<div class="a" style="left:657px;top:675px;width:318px;height:15px;background:#fff;border:1px solid #ababab"></div>
<div class="a" style="left:975px;top:676px;width:32px;height:13px;background:#dedede"></div>
<div class="a" style="left:1009px;top:675px;width:15px;height:15px;background:#fff;border:1px solid #ababab"></div>
<svg class="a" style="left:1014px;top:679px" width="5" height="8" viewBox="0 0 5 8"><path d="M0 0V7.5L4.5 3.75Z" fill="#666"/></svg>
<div class="a" style="left:1px;top:696px;width:1041px;height:19px;background:#f3f3f3;border-top:1px solid #d4d4d4"></div>
<svg class="a" style="left:7px;top:700px" width="14" height="12" viewBox="0 0 14 12"><circle cx="3" cy="3" r="2.8" fill="#555"/><rect x="6" y="1" width="7" height="3" fill="#555"/><rect x="0.7" y="4.7" width="12.5" height="6.8" fill="none" stroke="#555" stroke-width="1.2"/><path d="M3 7H11M3 9.5H11" stroke="#555" stroke-width="1" stroke-dasharray="1.5 1"/></svg>
<div class="a" style="left:743px;top:697px;width:38px;height:18px;background:#c6c6c6"></div>
<svg class="a" style="left:755px;top:700px" width="13" height="13" viewBox="0 0 13 13"><path d="M0.5 0.5H12.5V12.5H0.5Z M0.5 4.5H12.5M0.5 8.5H12.5M4.5 0.5V12.5M8.5 0.5V12.5" fill="none" stroke="#666" stroke-width="1"/></svg>
<svg class="a" style="left:793px;top:700px" width="14" height="13" viewBox="0 0 14 13"><rect x="0.5" y="0.5" width="13" height="12" fill="none" stroke="#666" stroke-width="1"/><rect x="3.5" y="2.5" width="7" height="8" fill="none" stroke="#666" stroke-width="1"/><path d="M5 5H9M5 6.5H9M5 8H9" stroke="#666" stroke-width="0.9"/></svg>
<svg class="a" style="left:831px;top:700px" width="14" height="13" viewBox="0 0 14 13"><path d="M0.5 0.5H13.5V12.5H0.5Z M0.5 7.5H7.5V0.5M4 0.5V7.5" fill="none" stroke="#666" stroke-width="1"/></svg>
<div class="a" style="left:862px;top:706px;width:6px;height:2px;background:#555"></div>
<div class="a" style="left:872px;top:707px;width:100px;height:1px;background:#bbb"></div>
<div class="a" style="left:920px;top:701px;width:5px;height:11px;background:#666"></div>
<svg class="a" style="left:975px;top:703px" width="8" height="8" viewBox="0 0 8 8"><path d="M4 0V8M0 4H8" stroke="#555" stroke-width="1.6"/></svg>
<div class="a" style="left:995px;top:701px;font-size:11.5px;color:#333;letter-spacing:-0.8px">100 %</div>
</body></html>
